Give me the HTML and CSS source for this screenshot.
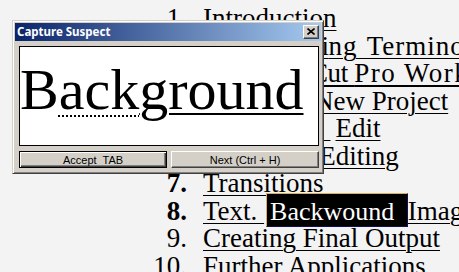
FILE: index.html
```html
<!DOCTYPE html>
<html>
<head>
<meta charset="utf-8">
<link rel="stylesheet" href="styles.css">
</head>
<body>
<ol class="toc">
  <li class="item"><span class="num">1.</span><span class="txt">Introduction</span></li>
  <li class="item"><span class="num">2.</span><span class="txt"><span class="tighter">Understandi</span><span class="spaced">ng Terminology</span></span></li>
  <li class="item"><span class="num">3.</span><span class="txt thick"><span class="tight">The Final Cut </span><span class="wide">Pro Workflow</span></span></li>
  <li class="item"><span class="num">4.</span><span class="txt">Starting a New Project</span></li>
  <li class="item"><span class="num">5.</span><span class="txt">The Rough <span class="shift">Edit</span></span></li>
  <li class="item"><span class="num">6.</span><span class="txt">Advanced Editing</span></li>
  <li class="item"><span class="num bold">7.</span><span class="txt">Transitions</span></li>
  <li class="item"><span class="num bold">8.</span><span class="txt">Text. <span class="hl">Backwound </span>Images</span></li>
  <li class="item"><span class="num">9.</span><span class="txt">Creating Final Output</span></li>
  <li class="item"><span class="num">10.</span><span class="txt">Further Applications</span></li>
</ol>

<div class="dialog">
  <div class="titlebar">
    <span class="title">Capture Suspect</span>
    <span class="close"><svg width="8" height="7" viewBox="0 0 8 7"><path d="M0.5 0.5 L7.5 6.5 M7.5 0.5 L0.5 6.5" stroke="#000" stroke-width="1.6" fill="none"/></svg></span>
  </div>
  <div class="content">
    <div class="preview"><span class="word">B<span class="dots">ack</span><span class="ul">ground</span></span></div>
    <div class="buttons">
      <div class="btn btn-default">Accept  TAB</div>
      <div class="btn">Next (Ctrl + H)</div>
    </div>
  </div>
</div>
</body>
</html>
```

FILE: styles.css
```css
html, body {
  margin: 0;
  padding: 0;
}

body {
  width: 459px;
  height: 272px;
  overflow: hidden;
  position: relative;
  background: #f3f3f3;
}

.toc {
  list-style: none;
  margin: 0;
  padding: 5px 0 0 150px;
  font-family: "Liberation Serif", "Times New Roman", serif;
  font-size: 27px;
  line-height: 27.5px;
  color: #000;
}

.item {
  display: grid;
  grid-template-columns: 37px max-content;
  column-gap: 16px;
  white-space: nowrap;
}

.num {
  text-align: right;
}

.bold {
  font-weight: 700;
}

.txt {
  text-decoration: underline;
  text-decoration-thickness: 1px;
  text-underline-offset: 3px;
}

.thick {
  text-decoration-thickness: 2px;
}

.tight {
  letter-spacing: -0.4px;
}

.tighter {
  letter-spacing: -0.6px;
}

.spaced {
  letter-spacing: 1px;
  word-spacing: 2px;
}

.wide {
  letter-spacing: 1.5px;
}

.shift {
  margin-left: 5px;
}

.hl {
  background: #000;
  color: #fff;
  font-size: 26px;
  padding: 3px 6px 0 3px;
  margin-left: 2px;
  border: 1px solid;
  border-color: #d8b060 #101050 #101050 #d8b060;
}

/* Dialog */
.dialog {
  position: absolute;
  left: 12px;
  top: 20px;
  width: 312px;
  height: 154px;
  box-sizing: border-box;
  background: #d4d0c8;
  border: 1px solid;
  border-color: #d4d0c8 #404040 #404040 #d4d0c8;
  box-shadow: inset 1px 1px #ffffff, inset -1px -1px #808080;
  padding: 2px;
  display: flex;
  flex-direction: column;
}

.titlebar {
  height: 18px;
  display: flex;
  align-items: center;
  justify-content: space-between;
  padding: 0 2px 0 2px;
  background: linear-gradient(to right, #0a246a, #a6caf0);
}

.title {
  color: #fff;
  font-family: "Noto Sans", "DejaVu Sans", sans-serif;
  font-weight: 700;
  font-size: 11.5px;
  line-height: 18px;
  white-space: nowrap;
}

.close {
  width: 16px;
  height: 14px;
  box-sizing: border-box;
  background: #d4d0c8;
  border: 1px solid;
  border-color: #ffffff #404040 #404040 #ffffff;
  box-shadow: inset -1px -1px #808080;
  display: flex;
  align-items: center;
  justify-content: center;
  padding: 0 1px 1px 0;
}

.close svg {
  display: block;
}

.content {
  padding: 5px 2px 3px 4px;
  display: flex;
  flex-direction: column;
}

.preview {
  height: 100px;
  box-sizing: border-box;
  background: #fff;
  border: 1px solid #000;
  padding: 14px 0 0 0;
  font-family: "Liberation Serif", "Times New Roman", serif;
  font-size: 58px;
  line-height: 58px;
  color: #000;
  white-space: nowrap;
  overflow: hidden;
}

.dots {
  text-decoration: underline dotted #000;
  text-decoration-thickness: 2px;
  text-underline-offset: 6px;
}

.ul {
  text-decoration: underline solid #000;
  text-decoration-thickness: 2px;
  text-underline-offset: 4px;
}

.buttons {
  margin-top: 5px;
  display: flex;
  gap: 4px;
}

.btn {
  flex: 0 0 148px;
  height: 17px;
  box-sizing: border-box;
  background: #d4d0c8;
  border: 1px solid;
  border-color: #ffffff #404040 #404040 #ffffff;
  box-shadow: inset -1px -1px #808080;
  font-family: "Liberation Sans", Arial, sans-serif;
  font-size: 11px;
  color: #000;
  display: flex;
  align-items: center;
  justify-content: center;
  white-space: pre;
}

.btn-default {
  border-color: #000;
  box-shadow: inset 1px 1px #ffffff, inset -1px -1px #404040, inset -2px -2px #808080;
}
```
